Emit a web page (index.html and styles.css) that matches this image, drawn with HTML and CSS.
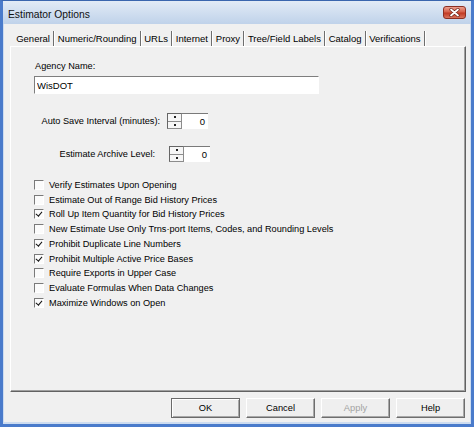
FILE: index.html
```html
<!DOCTYPE html>
<html lang="en">
<head>
  <meta charset="UTF-8" />
  <meta name="viewport" content="width=device-width, initial-scale=1.0"/>
  <title>Estimator Options</title>
  <link rel="stylesheet" href="styles.css">
</head>
<body>
  <div class="window">
    <div class="titlebar">
      <span class="title">Estimator Options</span>
      <span class="close">
        <svg width="11" height="9" viewBox="0 0 11 9">
          <path d="M2 1.5 L9 7.5 M9 1.5 L2 7.5" stroke="#6b2418" stroke-width="3.2" stroke-linecap="round"/>
          <path d="M2 1.5 L9 7.5 M9 1.5 L2 7.5" stroke="#ffffff" stroke-width="1.8" stroke-linecap="round"/>
        </svg>
      </span>
    </div>

    <div class="client">
      <div class="tabs">
        <span class="tab">General</span>
        <span class="tab">Numeric/Rounding</span>
        <span class="tab">URLs</span>
        <span class="tab">Internet</span>
        <span class="tab">Proxy</span>
        <span class="tab">Tree/Field Labels</span>
        <span class="tab">Catalog</span>
        <span class="tab">Verifications</span>
      </div>

      <div class="panel">
        <div class="agency-label">Agency Name:</div>
        <input class="text-input" type="text" value="WisDOT">

        <div class="spin-row interval">
          <span class="spin-label">Auto Save Interval (minutes):</span>
          <span class="spin">
            <span class="spin-btns"><span></span><span></span></span>
            <span class="spin-field">0</span>
          </span>
        </div>

        <div class="spin-row archive">
          <span class="spin-label">Estimate Archive Level:</span>
          <span class="spin">
            <span class="spin-btns"><span></span><span></span></span>
            <span class="spin-field">0</span>
          </span>
        </div>

        <div class="checks">
          <div class="check"><span class="box"></span>Verify Estimates Upon Opening</div>
          <div class="check"><span class="box"></span>Estimate Out of Range Bid History Prices</div>
          <div class="check"><span class="box checked"></span>Roll Up Item Quantity for Bid History Prices</div>
          <div class="check"><span class="box"></span>New Estimate Use Only Trns·port Items, Codes, and Rounding Levels</div>
          <div class="check"><span class="box checked"></span>Prohibit Duplicate Line Numbers</div>
          <div class="check"><span class="box checked"></span>Prohibit Multiple Active Price Bases</div>
          <div class="check"><span class="box"></span>Require Exports in Upper Case</div>
          <div class="check"><span class="box"></span>Evaluate Formulas When Data Changes</div>
          <div class="check"><span class="box checked"></span>Maximize Windows on Open</div>
        </div>
      </div>

      <div class="buttons">
        <button class="btn default">OK</button>
        <button class="btn">Cancel</button>
        <button class="btn" disabled>Apply</button>
        <button class="btn">Help</button>
      </div>
    </div>
  </div>
</body>
</html>
```

FILE: styles.css
```css
body {
  margin: 0;
  font-family: "Liberation Sans", Arial, sans-serif;
  font-size: 9.2px;
  color: #000000;
  background: #ffffff;
}
.window {
  width: 474px;
  height: 427px;
  box-sizing: border-box;
  border: 3px solid #4a7bcb;
  border-top: 1px solid #3a66ae;
  background: #cddcf0;
  display: flex;
  flex-direction: column;
}
.titlebar {
  height: 23px;
  flex: none;
  display: flex;
  justify-content: space-between;
  align-items: flex-start;
  padding: 0 5px;
  background: linear-gradient(#e2ebf6, #bfd2ea);
}
.title {
  font-size: 10.3px;
  line-height: 12px;
  margin-top: 8px;
  color: #111111;
}
.close {
  margin-top: 5px;
  width: 23px;
  height: 13px;
  box-sizing: border-box;
  border: 1px solid #8c2f22;
  border-radius: 3px;
  background: linear-gradient(#eba08f, #d5604a 45%, #c13a24 55%, #d9735c);
  display: flex;
  align-items: center;
  justify-content: center;
}
.client {
  flex: 1;
  margin: 0 1px 2px;
  background: #f0f0f0;
  display: flex;
  flex-direction: column;
}

/* tab strip */
.tabs {
  display: flex;
  height: 15px;
  margin: 7px 0 0 8.8px;
  font-size: 9.5px;
  line-height: 15px;
}
.tab {
  padding: 0 3.4px;
  border-right: 1px solid #6e6e6e;
  box-shadow: 1px 0 0 #ffffff;
}

.panel {
  height: 346px;
  box-sizing: border-box;
  margin: 0 4px 0 6px;
  padding-left: 24px;
  border: 1px solid;
  border-color: #ffffff #626262 #626262 #ffffff;
  box-shadow: inset -1px -1px 0 #a0a0a0;
}
.agency-label {
  margin-top: 13px;
  line-height: 12px;
}
.text-input {
  display: block;
  margin: 4px 0 0 -1px;
  width: 285px;
  height: 18px;
  box-sizing: border-box;
  border: 1px solid;
  border-color: #7e7e7e #ffffff #ffffff #7e7e7e;
  background: #ffffff;
  padding: 0 2px;
  font-family: inherit;
  font-size: 9.5px;
  color: #000000;
  outline: none;
}

/* spinner rows */
.spin-row {
  display: flex;
  align-items: center;
  height: 16px;
}
.spin-label {
  text-align: right;
}
.interval {
  margin-top: 19px;
}
.interval .spin-label {
  width: 125px;
  margin-right: 7px;
}
.archive {
  margin-top: 17px;
}
.archive .spin-label {
  width: 120px;
  margin-right: 14px;
}
.spin {
  display: flex;
  height: 16px;
}
.spin-btns {
  width: 15px;
  height: 16px;
  box-sizing: border-box;
  border: 1px solid #8c8c8c;
  border-top-color: #666666;
  border-left-color: #666666;
  background: #f6f6f6;
  display: flex;
  flex-direction: column;
}
.spin-btns span {
  flex: 1;
  display: flex;
  align-items: center;
  justify-content: center;
}
.spin-btns span:first-child {
  border-bottom: 1px solid #8c8c8c;
}
.spin-btns span::after {
  content: "";
  width: 2px;
  height: 2px;
  background: #222222;
}
.spin-field {
  width: 26px;
  height: 16px;
  box-sizing: border-box;
  border-top: 1px solid #7a7a7a;
  background: #ffffff;
  text-align: right;
  padding-right: 3px;
  line-height: 15px;
  font-size: 9.5px;
}

/* check boxes */
.checks {
  margin: 15.5px 0 0 -1px;
}
.check {
  display: flex;
  align-items: center;
  gap: 5px;
  height: 14.75px;
}
.box {
  width: 10px;
  height: 10px;
  box-sizing: border-box;
  border: 1px solid;
  border-color: #7a7a7a #ffffff #ffffff #7a7a7a;
  background: #fbfbfb;
  position: relative;
}
.box.checked::after {
  content: "";
  position: absolute;
  left: 2px;
  top: 0px;
  width: 2.5px;
  height: 5px;
  border: solid #111111;
  border-width: 0 1.6px 1.6px 0;
  transform: rotate(40deg);
}

/* dialog buttons */
.buttons {
  display: flex;
  justify-content: flex-end;
  gap: 6px;
  margin: 6px 5px 0 0;
}
.btn {
  width: 69px;
  height: 20px;
  box-sizing: border-box;
  padding: 0;
  border: 1px solid;
  border-color: #ffffff #6e6e6e #6e6e6e #ffffff;
  box-shadow: inset -1px -1px 0 #a8a8a8;
  background: #efefef;
  font-family: inherit;
  font-size: 9.3px;
  color: #000000;
}
.btn.default {
  border-color: #6a6a6a;
  box-shadow: inset 1px 1px 0 #ffffff, inset -1px -1px 0 #a8a8a8;
}
.btn:disabled {
  color: #a3a3a3;
}
```
